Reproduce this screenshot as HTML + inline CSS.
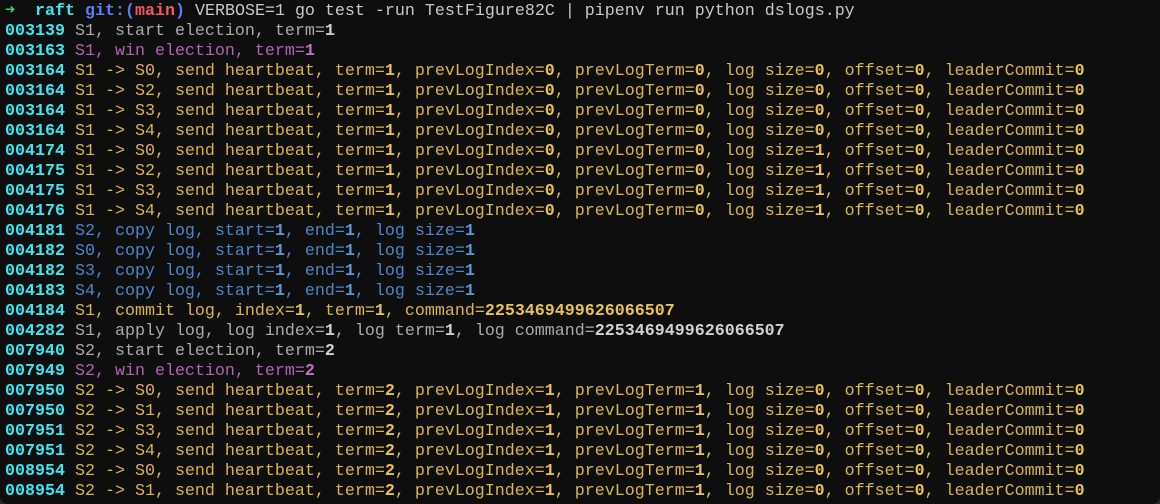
<!DOCTYPE html>
<html><head><style>
body{margin:0;background:#2a2a2a;}
#t{width:1160px;height:504px;background:#0e0e0e;border-radius:0 0 8px 8px;overflow:hidden;font-family:"Liberation Mono",monospace;font-size:16.67px;line-height:20px;white-space:pre;color:#b0b0b0;padding-left:5px;padding-top:2px;box-sizing:border-box;}
b{font-weight:bold}
.n{color:#3de6f0;font-weight:bold}
.g{color:#a9a9a9}.g b{color:#d0d0d0}
.m{color:#b260b4}.m b{color:#c070c2}
.y{color:#d9b54f}.y b{color:#e6c158}
.bl{color:#4b86c9}.bl b{color:#5b96d9}
</style></head><body><div id="t"><span style="color:#3cd07a;font-weight:bold">➜</span>  <span style="color:#3de6f0;font-weight:bold">raft</span> <span style="color:#5a7ef0;font-weight:bold">git:(</span><span style="color:#f05a5a;font-weight:bold">main</span><span style="color:#5a7ef0;font-weight:bold">)</span> <span style="color:#c8c8c8">VERBOSE=1 go test -run TestFigure82C | pipenv run python dslogs.py</span>
<span class="n">003139</span> <span class="g">S1, start election, term=<b>1</b></span>
<span class="n">003163</span> <span class="m">S1, win election, term=<b>1</b></span>
<span class="n">003164</span> <span class="y">S1 -&gt; S0, send heartbeat, term=<b>1</b>, prevLogIndex=<b>0</b>, prevLogTerm=<b>0</b>, log size=<b>0</b>, offset=<b>0</b>, leaderCommit=<b>0</b></span>
<span class="n">003164</span> <span class="y">S1 -&gt; S2, send heartbeat, term=<b>1</b>, prevLogIndex=<b>0</b>, prevLogTerm=<b>0</b>, log size=<b>0</b>, offset=<b>0</b>, leaderCommit=<b>0</b></span>
<span class="n">003164</span> <span class="y">S1 -&gt; S3, send heartbeat, term=<b>1</b>, prevLogIndex=<b>0</b>, prevLogTerm=<b>0</b>, log size=<b>0</b>, offset=<b>0</b>, leaderCommit=<b>0</b></span>
<span class="n">003164</span> <span class="y">S1 -&gt; S4, send heartbeat, term=<b>1</b>, prevLogIndex=<b>0</b>, prevLogTerm=<b>0</b>, log size=<b>0</b>, offset=<b>0</b>, leaderCommit=<b>0</b></span>
<span class="n">004174</span> <span class="y">S1 -&gt; S0, send heartbeat, term=<b>1</b>, prevLogIndex=<b>0</b>, prevLogTerm=<b>0</b>, log size=<b>1</b>, offset=<b>0</b>, leaderCommit=<b>0</b></span>
<span class="n">004175</span> <span class="y">S1 -&gt; S2, send heartbeat, term=<b>1</b>, prevLogIndex=<b>0</b>, prevLogTerm=<b>0</b>, log size=<b>1</b>, offset=<b>0</b>, leaderCommit=<b>0</b></span>
<span class="n">004175</span> <span class="y">S1 -&gt; S3, send heartbeat, term=<b>1</b>, prevLogIndex=<b>0</b>, prevLogTerm=<b>0</b>, log size=<b>1</b>, offset=<b>0</b>, leaderCommit=<b>0</b></span>
<span class="n">004176</span> <span class="y">S1 -&gt; S4, send heartbeat, term=<b>1</b>, prevLogIndex=<b>0</b>, prevLogTerm=<b>0</b>, log size=<b>1</b>, offset=<b>0</b>, leaderCommit=<b>0</b></span>
<span class="n">004181</span> <span class="bl">S2, copy log, start=<b>1</b>, end=<b>1</b>, log size=<b>1</b></span>
<span class="n">004182</span> <span class="bl">S0, copy log, start=<b>1</b>, end=<b>1</b>, log size=<b>1</b></span>
<span class="n">004182</span> <span class="bl">S3, copy log, start=<b>1</b>, end=<b>1</b>, log size=<b>1</b></span>
<span class="n">004183</span> <span class="bl">S4, copy log, start=<b>1</b>, end=<b>1</b>, log size=<b>1</b></span>
<span class="n">004184</span> <span class="y">S1, commit log, index=<b>1</b>, term=<b>1</b>, command=<b>2253469499626066507</b></span>
<span class="n">004282</span> <span class="g">S1, apply log, log index=<b>1</b>, log term=<b>1</b>, log command=<b>2253469499626066507</b></span>
<span class="n">007940</span> <span class="g">S2, start election, term=<b>2</b></span>
<span class="n">007949</span> <span class="m">S2, win election, term=<b>2</b></span>
<span class="n">007950</span> <span class="y">S2 -&gt; S0, send heartbeat, term=<b>2</b>, prevLogIndex=<b>1</b>, prevLogTerm=<b>1</b>, log size=<b>0</b>, offset=<b>0</b>, leaderCommit=<b>0</b></span>
<span class="n">007950</span> <span class="y">S2 -&gt; S1, send heartbeat, term=<b>2</b>, prevLogIndex=<b>1</b>, prevLogTerm=<b>1</b>, log size=<b>0</b>, offset=<b>0</b>, leaderCommit=<b>0</b></span>
<span class="n">007951</span> <span class="y">S2 -&gt; S3, send heartbeat, term=<b>2</b>, prevLogIndex=<b>1</b>, prevLogTerm=<b>1</b>, log size=<b>0</b>, offset=<b>0</b>, leaderCommit=<b>0</b></span>
<span class="n">007951</span> <span class="y">S2 -&gt; S4, send heartbeat, term=<b>2</b>, prevLogIndex=<b>1</b>, prevLogTerm=<b>1</b>, log size=<b>0</b>, offset=<b>0</b>, leaderCommit=<b>0</b></span>
<span class="n">008954</span> <span class="y">S2 -&gt; S0, send heartbeat, term=<b>2</b>, prevLogIndex=<b>1</b>, prevLogTerm=<b>1</b>, log size=<b>0</b>, offset=<b>0</b>, leaderCommit=<b>0</b></span>
<span class="n">008954</span> <span class="y">S2 -&gt; S1, send heartbeat, term=<b>2</b>, prevLogIndex=<b>1</b>, prevLogTerm=<b>1</b>, log size=<b>0</b>, offset=<b>0</b>, leaderCommit=<b>0</b></span></div></body></html>
